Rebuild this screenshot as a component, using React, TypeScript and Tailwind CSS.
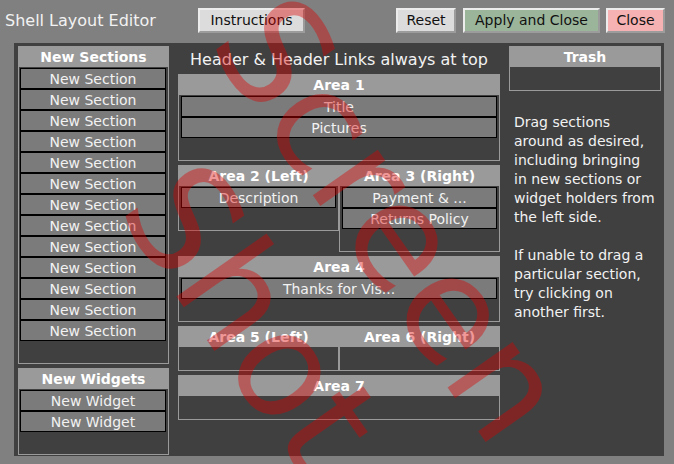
import React from "react";

function Item({ label }: { label: string }) {
  return (
    <div className="h-[21px] border border-black bg-[#7b7b7b] text-center text-[14px] leading-[20px] text-[#f2f2f2] whitespace-nowrap overflow-hidden">
      {label}
    </div>
  );
}

function Box({
  title,
  items,
  className = "",
}: {
  title: string;
  items: string[];
  className?: string;
}) {
  return (
    <div className={"border border-[#9a9a9a] bg-[#404040] " + className}>
      <div className="h-[20px] bg-[#9a9a9a] text-center text-[14px] font-bold leading-[20px] text-white whitespace-nowrap">
        {title}
      </div>
      <div className="px-[2px] pt-[1px] pb-[22px]">
        {items.map((it, i) => (
          <Item key={i} label={it} />
        ))}
      </div>
    </div>
  );
}

function SideBox({ title, items }: { title: string; items: string[] }) {
  return (
    <div className="border border-[#9a9a9a] bg-[#404040]">
      <div className="h-[20px] bg-[#9a9a9a] text-center text-[14px] font-bold leading-[20px] text-white">
        {title}
      </div>
      <div className="pl-[1px] pr-[2px] pt-[1px] pb-[22px]">
        {items.map((it, i) => (
          <Item key={i} label={it} />
        ))}
      </div>
    </div>
  );
}

const btn =
  "h-[25px] border-2 border-t-[#ececec] border-l-[#ececec] border-b-[#9c9c9c] border-r-[#9c9c9c] text-[14px] leading-[21px] text-[#111] text-center";

export default function App() {
  const sections = Array.from({ length: 13 }, () => "New Section");
  return (
    <div className="relative h-[464px] w-[674px] overflow-hidden bg-[#808080] font-['DejaVu_Sans',Verdana,sans-serif]">
      {/* top bar */}
      <div className="flex h-[43px] items-start pt-[8px] pr-[9px]">
        <div className="w-[198px] pl-[5px] text-[16px] leading-[25px] text-[#f2f2f2] whitespace-nowrap">
          Shell Layout Editor
        </div>
        <button className={btn + " w-[107px] bg-[#dcdcdc]"}>Instructions</button>
        <div className="ml-auto flex gap-[6px]">
          <button className={btn + " mr-[1px] w-[60px] bg-[#dcdcdc]"}>Reset</button>
          <button className={btn + " w-[137px] bg-[#9bb59b]"}>Apply and Close</button>
          <button className={btn + " w-[59px] bg-[#f6b2b2]"}>Close</button>
        </div>
      </div>

      {/* main panel */}
      <div className="ml-[14px] flex h-[413px] w-[650px] gap-[9px] bg-[#404040] pl-[4px] pr-[3px] pt-[3px]">
        {/* left */}
        <div className="flex w-[151px] flex-col gap-[4px]">
          <SideBox title="New Sections" items={sections} />
          <SideBox title="New Widgets" items={["New Widget", "New Widget"]} />
        </div>

        {/* middle */}
        <div className="flex w-[322px] flex-col gap-[4px]">
          <div className="h-[24px] text-center text-[16px] leading-[28px] text-[#f2f2f2] whitespace-nowrap">
            Header &amp; Header Links always at top
          </div>
          <Box title="Area 1" items={["Title", "Pictures"]} />
          <div className="flex items-start">
            <Box title="Area 2 (Left)" items={["Description"]} className="w-[161px]" />
            <Box
              title="Area 3 (Right)"
              items={["Payment & ...", "Returns Policy"]}
              className="w-[161px]"
            />
          </div>
          <Box title="Area 4" items={["Thanks for Vis..."]} />
          <div className="flex items-start">
            <Box title="Area 5 (Left)" items={[]} className="w-[161px]" />
            <Box title="Area 6 (Right)" items={[]} className="w-[161px]" />
          </div>
          <Box title="Area 7" items={[]} />
        </div>

        {/* right */}
        <div className="flex w-[152px] flex-col">
          <Box title="Trash" items={[]} />
          <div className="mt-[22px] pl-[5px] text-[14px] leading-[19px] text-[#f2f2f2] whitespace-nowrap">
            Drag sections
            <br />
            around as desired,
            <br />
            including bringing
            <br />
            in new sections or
            <br />
            widget holders from
            <br />
            the left side.
            <br />
            <br />
            If unable to drag a
            <br />
            particular section,
            <br />
            try clicking on
            <br />
            another first.
          </div>
        </div>
      </div>

      {/* watermark */}
      <div className="pointer-events-none absolute left-[321px] top-[268px] -translate-x-1/2 -translate-y-1/2 rotate-[55deg] whitespace-nowrap text-center font-['DejaVu_Sans',sans-serif] text-[145px] leading-[170px] text-[rgba(220,0,0,0.4)]">
        Screen
        <br />
        Shot
      </div>
    </div>
  );
}
